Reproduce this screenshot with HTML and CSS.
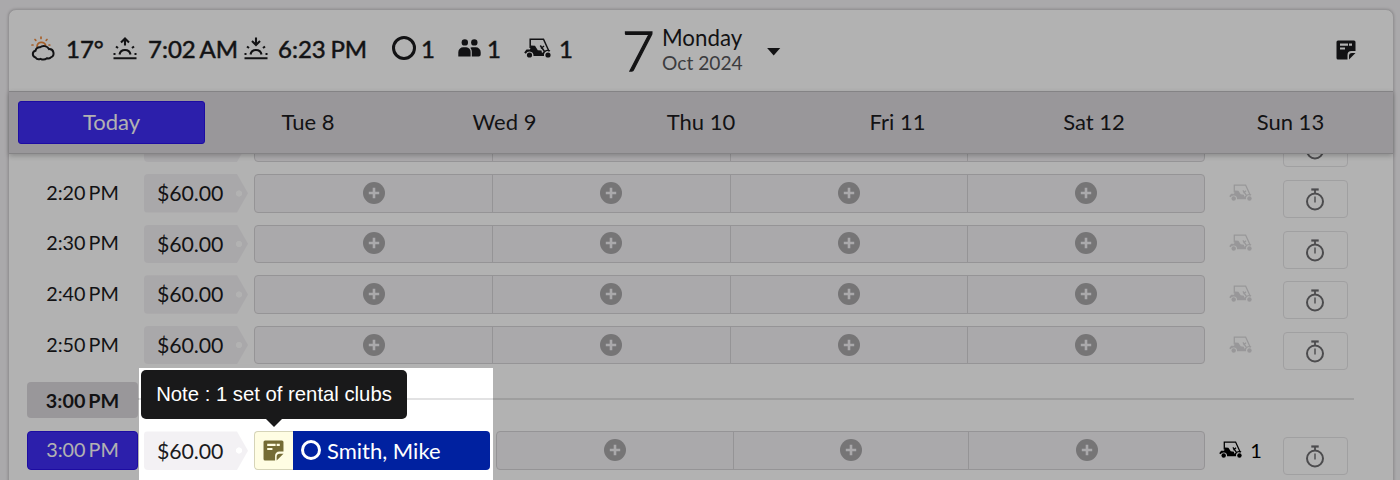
FILE: index.html
```html
<!DOCTYPE html>
<html lang="en">
<head>
  <meta charset="UTF-8">
  <meta name="viewport" content="width=device-width, initial-scale=1.0">
  <title>Tee Sheet</title>
  <link rel="stylesheet" href="styles.css">
</head>
<body>
  <svg class="icon-defs" width="0" height="0">
    <symbol id="weather" viewBox="0 0 25 26">
      <g fill="none" stroke="#f08a3c" stroke-width="1.7" stroke-linecap="round">
        <path d="M6 10.500a4.500 4.500 0 0 1 8.700-1.200"/>
        <path d="M10 1v1.500M4 3.500l.8.8M16 3.500l-.8.8M1 9h1M18 9h.8"/>
      </g>
      <path d="M4.500 21.500a3.500 3.500 0 0 1 0-6.800a4 4 0 0 1 4.500-3.400a6 6 0 0 1 9 1.800a4.300 4.300 0 0 1 1.800 8.300a4 4 0 0 1-3.800.8a6 6 0 0 1-6.500.6a4 4 0 0 1-5-1.300z" fill="none" stroke="currentColor" stroke-width="2"/>
    </symbol>
    <symbol id="sunrise" viewBox="0 0 24 23">
      <path d="M12 8.500V2M8 5.500l4-4 4 4M6.500 17.500a5.600 5.600 0 0 1 11 0M0.500 21.200h23" fill="none" stroke="currentColor" stroke-width="2.100"/>
      <path d="M3 9.500l2 1.500M21 9.500l-2 1.500M0.500 17h2M21.500 17h2" stroke="currentColor" stroke-width="2.100"/>
    </symbol>
    <symbol id="sunset" viewBox="0 0 24 23">
      <path d="M12 0.500v6.500M8 4l4 4 4-4M6.500 17.500a5.600 5.600 0 0 1 11 0M0.500 21.200h23" fill="none" stroke="currentColor" stroke-width="2.100"/>
      <path d="M3 9.500l2 1.500M21 9.500l-2 1.500M0.500 17h2M21.500 17h2" stroke="currentColor" stroke-width="2.100"/>
    </symbol>
    <symbol id="people" viewBox="0 0 23 18">
      <circle cx="6.800" cy="3.400" r="3.200"/>
      <circle cx="16.300" cy="3.400" r="3.200"/>
      <path d="M0.300 17.500v-4.300a5 5 0 0 1 5-5h3a4.500 4.500 0 0 1 4.300 4.800v4.500z"/>
      <path d="M13.800 17.500v-4.500c0-1.800-.5-3.200-1.500-4.300c.5-.3 1-.5 1.600-.5h3.800a5 5 0 0 1 5 5v2.300a2 2 0 0 1-2 2z"/>
    </symbol>
    <symbol id="cart" viewBox="0 0 27 20">
      <path d="M6.200 10V1.200h13.300l5.500 12M16.300 7.500l4.200 6M20 8l-3 2.500" fill="none" stroke="currentColor" stroke-width="1.500"/>
      <path d="M7 7.500l4 .3 2.800 4.400 3.700.3.500 2.500 2-1.500v4.500H9.500a4.300 4.300 0 0 0-4-4.500 4.300 4.300 0 0 0-3.700 2.200L0.200 14.500l2.300-3H6z"/>
      <path d="M19.500 15.500a4.500 4.500 0 0 1 6.500-2.500" fill="none" stroke="currentColor" stroke-width="1.400"/>
      <circle cx="5.500" cy="17" r="2.600"/>
      <circle cx="24" cy="17" r="2.600"/>
    </symbol>
    <symbol id="note" viewBox="0 0 20 20">
      <path fill-rule="evenodd" d="M2 0.500h16a1.500 1.500 0 0 1 1.500 1.500v9h-4a4 4 0 0 0-4 4v4.500H2A1.500 1.500 0 0 1 .5 18V2A1.500 1.500 0 0 1 2 .5zM4 3.500v2.200h8V3.500zM13 3.500v2.200h3V3.500zM4 7.500v2h5v-2z"/>
      <path d="M13 19.500l6.500-6.500h-3.500a3 3 0 0 0-3 3z"/>
    </symbol>
    <symbol id="plus" viewBox="0 0 22 22">
      <circle cx="11" cy="11" r="11"/>
      <path d="M11 5.800v10.400M5.800 11h10.400" stroke="#f4f2f5" stroke-width="2.600"/>
    </symbol>
    <symbol id="stopwatch" viewBox="0 0 20 23">
      <circle cx="10" cy="13.500" r="8" fill="none" stroke="currentColor" stroke-width="2"/>
      <path d="M10 5V1.500" stroke="currentColor" stroke-width="1.800"/>
      <path d="M6.300 1.500h7.400" stroke="currentColor" stroke-width="2.200"/>
      <path d="M10 8.500v6" stroke="currentColor" stroke-width="1.400"/>
    </symbol>
  </svg>

  <div class="panel">
    <header class="topbar">
      <svg class="icon-weather"><use href="#weather"/></svg>
      <span class="temp">17°</span>
      <svg class="icon-sun"><use href="#sunrise"/></svg>
      <span class="sun-time">7:02 AM</span>
      <svg class="icon-sun"><use href="#sunset"/></svg>
      <span class="sun-time sunset-time">6:23 PM</span>
      <span class="ring"></span>
      <span class="count count-holes">1</span>
      <svg class="icon-people"><use href="#people"/></svg>
      <span class="count count-people">1</span>
      <svg class="icon-cart"><use href="#cart"/></svg>
      <span class="count count-carts">1</span>
      <div class="date">
        <span class="day-number">7</span>
        <div class="day-text">
          <div class="weekday">Monday</div>
          <div class="month">Oct 2024</div>
        </div>
        <span class="caret"></span>
      </div>
      <svg class="icon-note"><use href="#note"/></svg>
    </header>

    <nav class="week">
      <a class="day active">Today</a>
      <a class="day">Tue 8</a>
      <a class="day">Wed 9</a>
      <a class="day">Thu 10</a>
      <a class="day">Fri 11</a>
      <a class="day">Sat 12</a>
      <a class="day">Sun 13</a>
    </nav>

    <main class="sheet">
      <!-- scrolled under the week bar -->
      <div class="row">
        <div class="time"></div>
        <div class="price"></div>
        <div class="slots">
          <div class="slot"></div>
          <div class="slot"></div>
          <div class="slot"></div>
          <div class="slot"></div>
        </div>
        <div class="carts"></div>
        <div class="timer"><svg><use href="#stopwatch"/></svg></div>
      </div>
      <div class="row">
        <div class="time">2:20 PM</div>
        <div class="price"><span>$60.00</span></div>
        <div class="slots">
          <div class="slot"><svg><use href="#plus"/></svg></div>
          <div class="slot"><svg><use href="#plus"/></svg></div>
          <div class="slot"><svg><use href="#plus"/></svg></div>
          <div class="slot"><svg><use href="#plus"/></svg></div>
        </div>
        <div class="carts"><svg><use href="#cart"/></svg></div>
        <div class="timer"><svg><use href="#stopwatch"/></svg></div>
      </div>
      <div class="row">
        <div class="time">2:30 PM</div>
        <div class="price"><span>$60.00</span></div>
        <div class="slots">
          <div class="slot"><svg><use href="#plus"/></svg></div>
          <div class="slot"><svg><use href="#plus"/></svg></div>
          <div class="slot"><svg><use href="#plus"/></svg></div>
          <div class="slot"><svg><use href="#plus"/></svg></div>
        </div>
        <div class="carts"><svg><use href="#cart"/></svg></div>
        <div class="timer"><svg><use href="#stopwatch"/></svg></div>
      </div>
      <div class="row">
        <div class="time">2:40 PM</div>
        <div class="price"><span>$60.00</span></div>
        <div class="slots">
          <div class="slot"><svg><use href="#plus"/></svg></div>
          <div class="slot"><svg><use href="#plus"/></svg></div>
          <div class="slot"><svg><use href="#plus"/></svg></div>
          <div class="slot"><svg><use href="#plus"/></svg></div>
        </div>
        <div class="carts"><svg><use href="#cart"/></svg></div>
        <div class="timer"><svg><use href="#stopwatch"/></svg></div>
      </div>
      <div class="row">
        <div class="time">2:50 PM</div>
        <div class="price"><span>$60.00</span></div>
        <div class="slots">
          <div class="slot"><svg><use href="#plus"/></svg></div>
          <div class="slot"><svg><use href="#plus"/></svg></div>
          <div class="slot"><svg><use href="#plus"/></svg></div>
          <div class="slot"><svg><use href="#plus"/></svg></div>
        </div>
        <div class="carts"><svg><use href="#cart"/></svg></div>
        <div class="timer"><svg><use href="#stopwatch"/></svg></div>
      </div>

      <div class="hour">
        <div class="hour-label">3:00 PM</div>
        <div class="hour-line"></div>
      </div>

      <div class="row">
        <div class="time selected">3:00 PM</div>
        <div class="price"><span>$60.00</span></div>
        <div class="booked">
          <div class="booking">
            <div class="booking-note">
              <svg><use href="#note"/></svg>
              <div class="tooltip">Note : 1 set of rental clubs</div>
            </div>
            <div class="player"><span class="ring ring-small"></span><span>Smith, Mike</span></div>
          </div>
          <div class="slots">
            <div class="slot"><svg><use href="#plus"/></svg></div>
            <div class="slot"><svg><use href="#plus"/></svg></div>
            <div class="slot"><svg><use href="#plus"/></svg></div>
          </div>
        </div>
        <div class="carts has-cart"><svg><use href="#cart"/></svg><span>1</span></div>
        <div class="timer"><svg><use href="#stopwatch"/></svg></div>
      </div>
    </main>
  </div>

  <!-- dims everything outside the highlighted booking -->
  <div class="spotlight"></div>
</body>
</html>
```
FILE: styles.css
```css
* {
  box-sizing: border-box;
}
body {
  margin: 0;
  height: 480px;
  padding: 9px 6px 0 8px;
  overflow: hidden;
  background: #f4f2f5;
  font-family: Lato, sans-serif;
  color: #1b1b1d;
}
svg {
  display: block;
  flex: none;
  fill: currentColor;
}
.icon-defs {
  position: absolute;
}
.panel {
  height: 490px;
  background: #fff;
  border: 1px solid #d6d4d7;
  border-radius: 8px 8px 0 0;
  box-shadow: 0 0 3px rgba(0, 0, 0, 0.2);
}

/* top bar */
.topbar {
  display: flex;
  align-items: center;
  height: 81px;
  padding: 0 37px 0 22px;
  white-space: nowrap;
}
.icon-weather {
  width: 25px;
  height: 26px;
  margin-top: -4px;
}
.temp, .sun-time, .count {
  margin-top: -3px;
  font-size: 24px;
  line-height: 30px;
  word-spacing: -1.500px;
  -webkit-text-stroke: 0.5px currentColor;
}
.temp {
  width: 47px;
  margin-left: 10px;
}
.icon-sun {
  width: 24px;
  height: 23px;
  margin-top: -4px;
}
.sun-time {
  width: 96px;
  margin-left: 11px;
}
.sunset-time {
  width: 114px;
  margin-left: 10px;
}
.ring {
  flex: none;
  width: 24px;
  height: 24px;
  margin-top: -5px;
  border: 3px solid currentColor;
  border-radius: 50%;
}
.count-holes {
  width: 37px;
  margin-left: 5px;
}
.icon-people {
  width: 23px;
  height: 18px;
  margin-top: -6px;
}
.count-people {
  width: 37px;
  margin-left: 6px;
}
.icon-cart {
  width: 27px;
  height: 20px;
  margin-top: -5px;
}
.count-carts {
  width: 64px;
  margin-left: 8px;
}
.date {
  display: flex;
  align-items: center;
  margin-top: -2px;
}
.day-number {
  width: 39px;
  margin-left: -1px;
  font-size: 56px;
  font-weight: 300;
  line-height: 60px;
  -webkit-text-stroke: 1.300px currentColor;
}
.weekday {
  margin-left: 1px;
  font-size: 22.300px;
  line-height: 26px;
}
.month {
  margin-left: 1px;
  font-size: 19.200px;
  line-height: 23px;
  color: #56565a;
}
.caret {
  width: 14px;
  height: 8px;
  margin: 4px 0 0 24px;
  background: currentColor;
  clip-path: polygon(0 0, 100% 0, 50% 100%);
}
.icon-note {
  width: 20px;
  height: 20px;
  margin-left: auto;
  margin-top: -2px;
}

/* week days */
.week {
  position: relative;
  z-index: 1;
  display: grid;
  grid-template-columns: repeat(7, 1fr);
  column-gap: 9.400px;
  height: 63px;
  padding: 9px;
  background: #dcd9dd;
  border-top: 1px solid #bebcbf;
  border-bottom: 1px solid #bebcbf;
  box-shadow: 0 2px 5px rgba(0, 0, 0, 0.22);
}
.day {
  display: flex;
  align-items: center;
  justify-content: center;
  padding-bottom: 2px;
  font-size: 22px;
}
.active {
  background: #3f2df5;
  border: 1px solid #2a12e8;
  border-radius: 3px;
  color: #fff;
}

/* tee sheet */
.sheet {
  margin-top: -30.600px;
  padding-left: 18px;
}
.row {
  display: grid;
  grid-template-columns: 117px 110px 951px 78px 65px;
  grid-template-rows: 38.500px;
  height: 38.500px;
  margin-bottom: 12.100px;
}
.time {
  display: flex;
  align-items: center;
  justify-content: center;
  width: 111px;
  padding-bottom: 3px;
  font-size: 19.800px;
  word-spacing: -2px;
}
.selected {
  background: #3f2df5;
  border: 1px solid #2a12e8;
  border-radius: 4px;
  color: #fff;
}
.price {
  display: flex;
  align-items: center;
  width: 104px;
  padding-left: 13px;
  border-radius: 4px 0 0 4px;
  background: radial-gradient(circle at 95px 50%, #fff 2.800px, #f3f1f4 3.400px);
  clip-path: polygon(0 0, 93px 0, 104px 50%, 93px 100%, 0 100%);
  font-size: 21.300px;
  letter-spacing: -0.100px;
}
.slots {
  display: grid;
  grid-auto-flow: column;
  grid-auto-columns: 1fr;
  flex: 1;
  background: #f4f2f5;
  border: 1px solid #d6d4d7;
  border-radius: 4px;
}
.slot {
  display: flex;
  align-items: center;
  justify-content: center;
  color: #a9a8aa;
}
.slot + .slot {
  border-left: 1px solid #d6d4d7;
}
.slot svg {
  width: 22px;
  height: 22px;
  margin-top: -1px;
}
.carts {
  display: flex;
  align-items: center;
  justify-content: center;
  width: 71px;
  padding-bottom: 2px;
  color: #dad9db;
}
.carts svg {
  width: 23px;
  height: 17px;
}
.has-cart {
  color: #000;
  font-size: 20px;
}
.has-cart span {
  margin-left: 8px;
}
.timer {
  display: flex;
  align-items: center;
  justify-content: center;
  height: 38px;
  margin-top: 6px;
  padding-right: 2px;
  border: 1px solid #e6e5e7;
  border-radius: 4px;
  color: #6e6d70;
}
.timer svg {
  width: 20px;
  height: 23px;
  margin-top: 1px;
}
.hour {
  display: flex;
  align-items: center;
  width: 1327px;
  height: 37px;
  margin: 17.600px 0 12.500px;
}
.hour-label {
  width: 111px;
  background: #dcd9dd;
  border-radius: 4px;
  font-size: 19.800px;
  font-weight: 700;
  line-height: 36px;
  text-align: center;
  word-spacing: -2px;
}
.hour-line {
  flex: 1;
  height: 2px;
  margin-top: -3px;
  background: #e2e2e3;
}

/* booking */
.booked {
  display: flex;
  gap: 6px;
}
.booking {
  display: flex;
  width: 236px;
}
.booking-note {
  position: relative;
  display: flex;
  align-items: center;
  justify-content: center;
  width: 39px;
  padding-right: 1px;
  background: #fffde3;
  border: 1px solid #d6d4b8;
  border-right: 0;
  border-radius: 4px 0 0 4px;
  color: #756c35;
}
.booking-note svg {
  width: 21px;
  height: 21px;
}
.player {
  display: flex;
  align-items: center;
  flex: 1;
  padding-left: 8px;
  background: #0021a0;
  border-radius: 0 4px 4px 0;
  color: #fff;
  font-size: 22px;
}
.ring-small {
  width: 20px;
  height: 20px;
  margin: -2px 6px 0 0;
}
.tooltip {
  position: absolute;
  left: -114px;
  bottom: 50px;
  width: 266px;
  height: 49px;
  background: #19191a;
  border-radius: 5px;
  color: #fff;
  font-family: "Liberation Sans", Arial, sans-serif;
  font-size: 20.300px;
  line-height: 49px;
  text-align: center;
  white-space: nowrap;
}
.tooltip::after {
  content: "";
  position: absolute;
  left: 125px;
  top: 100%;
  border: 8px solid transparent;
  border-top-color: #19191a;
  border-bottom: 0;
}

.spotlight {
  position: absolute;
  z-index: 2;
  left: 139px;
  top: 368px;
  width: 354px;
  height: 112px;
  box-shadow: 0 0 0 1500px rgba(0, 0, 0, 0.3);
  pointer-events: none;
}
```
